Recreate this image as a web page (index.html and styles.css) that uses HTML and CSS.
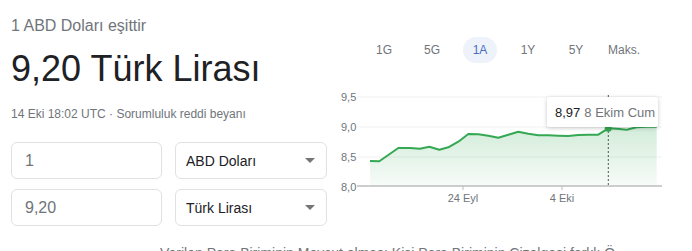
FILE: index.html
```html
<!DOCTYPE html>
<html>
<head>
    <title>1 ABD Doları - Türk Lirası</title>
    <link rel="stylesheet" href="styles.css">
</head>
<body>
    <div class="main">
        <div class="left">
            <div class="equals">1 ABD Doları eşittir</div>
            <div class="result">9,20 Türk Lirası</div>
            <div class="meta">14 Eki 18:02 UTC · Sorumluluk reddi beyanı</div>
            <div class="converter">
                <div class="row">
                    <div class="amount">1</div>
                    <div class="currency">ABD Doları<span class="arrow"></span></div>
                </div>
                <div class="row">
                    <div class="amount">9,20</div>
                    <div class="currency">Türk Lirası<span class="arrow"></span></div>
                </div>
            </div>
        </div>
        <div class="right">
            <div class="tabs">
                <div class="tab">1G</div>
                <div class="tab">5G</div>
                <div class="tab active"><span>1A</span></div>
                <div class="tab">1Y</div>
                <div class="tab">5Y</div>
                <div class="tab">Maks.</div>
            </div>
            <div class="chart">
                <svg width="362" height="125" viewBox="0 0 362 125">
                    <defs>
                        <linearGradient id="fill" x1="0" y1="0" x2="0" y2="1">
                            <stop offset="0" stop-color="#34a853" stop-opacity="0.22"/>
                            <stop offset="1" stop-color="#34a853" stop-opacity="0.04"/>
                        </linearGradient>
                    </defs>
                    <!-- grid -->
                    <line x1="27" y1="12" x2="332" y2="12" stroke="#f1f1f1"/>
                    <line x1="27" y1="42" x2="332" y2="42" stroke="#f1f1f1"/>
                    <line x1="27" y1="72" x2="332" y2="72" stroke="#f1f1f1"/>
                    <g class="axis-label">
                        <text x="11" y="16">9,5</text>
                        <text x="11" y="46">9,0</text>
                        <text x="11" y="76">8,5</text>
                        <text x="11" y="106">8,0</text>
                    </g>
                    <path d="M40,76 L49.3,76.3 L68.3,63 L80,63 L90,63.7 L99.3,61.7 L109.3,64.7 L118.3,62.3 L128.3,56.7 L138.3,49 L148.3,49.3 L158.3,50.7 L168.3,52.7 L178.3,49.7 L188.3,46.7 L198.3,48.7 L208.3,50.3 L218.3,50.3 L228.3,50.7 L238.3,51 L248.3,50 L258.3,49.7 L268.3,49.7 L278.3,43.3 L286.7,43.7 L296.7,44.7 L306.7,42.3 L316.7,41.7 L326.7,41.7 L326.7,101 L40,101 Z" fill="url(#fill)"/>
                    <path d="M40,76 L49.3,76.3 L68.3,63 L80,63 L90,63.7 L99.3,61.7 L109.3,64.7 L118.3,62.3 L128.3,56.7 L138.3,49 L148.3,49.3 L158.3,50.7 L168.3,52.7 L178.3,49.7 L188.3,46.7 L198.3,48.7 L208.3,50.3 L218.3,50.3 L228.3,50.7 L238.3,51 L248.3,50 L258.3,49.7 L268.3,49.7 L278.3,43.3 L286.7,43.7 L296.7,44.7 L306.7,42.3 L316.7,41.7 L326.7,41.7" fill="none" stroke="#34a853" stroke-width="2" stroke-linejoin="round"/>
                    <line x1="27" y1="101" x2="332" y2="101" stroke="#bdbdbd" stroke-width="1.5"/>
                    <line x1="133" y1="101" x2="133" y2="105" stroke="#bdbdbd"/>
                    <line x1="232" y1="101" x2="232" y2="105" stroke="#bdbdbd"/>
                    <g class="axis-label" text-anchor="middle">
                        <text x="133" y="117">24 Eyl</text>
                        <text x="232" y="117">4 Eki</text>
                    </g>
                    <line x1="278.3" y1="10" x2="278.3" y2="101" stroke="#555" stroke-dasharray="2,2"/>
                    <circle cx="278.3" cy="43.3" r="3.5" fill="#34a853"/>
                </svg>
                <div class="tooltip"><b>8,97</b> 8 Ekim Cum</div>
            </div>
        </div>
    </div>
    <div class="footer">Verilen Para Biriminin Mevcut olması Kişi Para Biriminin Çizelgesi farklı Ö</div>
</body>
</html>
```

FILE: styles.css
```css
body {
    margin: 0;
    font-family: "Liberation Sans", Arial, sans-serif;
    color: #202124;
    background: #fff;
    overflow: hidden;
}
.main {
    display: flex;
}
.left {
    width: 319px;
    padding-left: 11px;
    padding-top: 16px;
}
.equals {
    font-size: 16px;
    line-height: 20px;
    color: #70757a;
}
.result {
    font-size: 36px;
    line-height: 44px;
    margin-top: 11px;
}
.meta {
    font-size: 12px;
    line-height: 16px;
    color: #70757a;
    margin-top: 15px;
}
.converter {
    margin-top: 20px;
    display: flex;
    flex-direction: column;
    gap: 10px;
}
.row {
    display: flex;
    gap: 13px;
}
.amount, .currency {
    box-sizing: border-box;
    height: 37px;
    border: 1px solid #dfe1e5;
    border-radius: 6px;
    display: flex;
    align-items: center;
}
.amount {
    width: 151px;
    padding-left: 13px;
    font-size: 16px;
    color: #70757a;
}
.currency {
    width: 152px;
    padding: 0 10px;
    font-size: 14px;
    justify-content: space-between;
}
.arrow {
    width: 0;
    height: 0;
    border-left: 5px solid transparent;
    border-right: 5px solid transparent;
    border-top: 5px solid #757575;
    margin-right: 1px;
}
.right {
    width: 362px;
    padding-top: 37px;
}
.tabs {
    display: flex;
    margin-left: 30px;
    height: 26px;
}
.tab {
    width: 48px;
    display: flex;
    align-items: center;
    justify-content: center;
    font-size: 12px;
    color: #70757a;
}
.tab.active span {
    display: flex;
    align-items: center;
    justify-content: center;
    width: 34px;
    height: 26px;
    border-radius: 13px;
    background: #eef3fb;
    color: #4a6fc0;
}
.chart {
    position: relative;
    margin-top: 22px;
    height: 125px;
}
.chart svg {
    display: block;
}
.axis-label {
    font-family: "Liberation Sans", Arial, sans-serif;
    font-size: 11px;
    fill: #70757a;
}
.tooltip {
    position: absolute;
    left: 217px;
    top: 12px;
    width: 111px;
    height: 30px;
    box-sizing: border-box;
    background: #fff;
    border-radius: 2px;
    box-shadow: 0 1px 4px rgba(0, 0, 0, 0.22);
    display: flex;
    align-items: center;
    padding-left: 8px;
    font-size: 13px;
    color: #70757a;
    white-space: nowrap;
}
.tooltip b {
    font-weight: normal;
    color: #202124;
    margin-right: 4px;
}
.footer {
    margin-top: 17px;
    padding-left: 160px;
    font-size: 14px;
    line-height: 20px;
    color: #70757a;
    white-space: nowrap;
    overflow: hidden;
}
```
